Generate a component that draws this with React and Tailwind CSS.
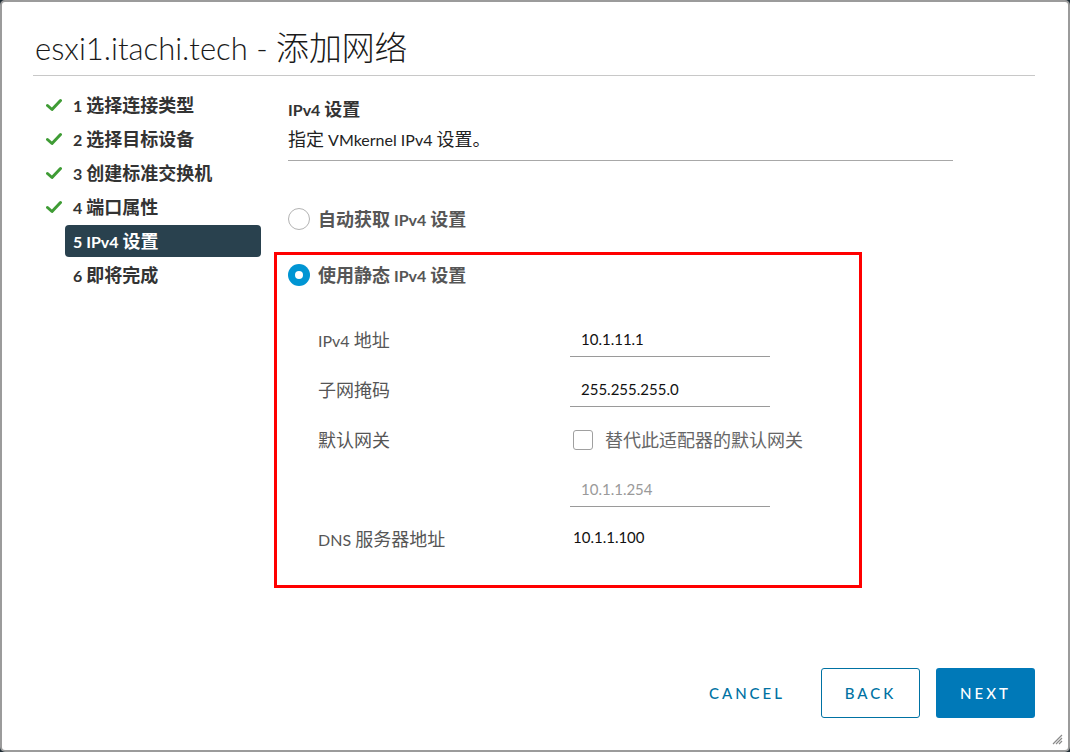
import React from 'react';

const steps = [
  { label: '1 选择连接类型', done: true },
  { label: '2 选择目标设备', done: true },
  { label: '3 创建标准交换机', done: true },
  { label: '4 端口属性', done: true },
  { label: '5 IPv4 设置', active: true },
  { label: '6 即将完成' },
];

const font = { fontFamily: 'Lato, "Noto Sans CJK SC", sans-serif' };

// CJK glyphs in the original are drawn larger than the Latin ones
const T = ({ children, big = 'text-[1.125em]' }) =>
  String(children)
    .split(/([\u3000-\u9fff\uff00-\uffef]+)/)
    .map((part, i) =>
      /[\u3000-\u9fff\uff00-\uffef]/.test(part) ? (
        <span key={i} className={big}>{part}</span>
      ) : (
        <React.Fragment key={i}>{part}</React.Fragment>
      )
    );

const Check = () => (
  <svg width="16" height="14" viewBox="0 0 16 14">
    <path d="M1.5 7.5 L6 11.5 L14.5 2.5" fill="none" stroke="#3f9c35" strokeWidth="3" strokeLinecap="round" strokeLinejoin="round" />
  </svg>
);

const Field = ({ value, muted }) => (
  <div className="w-[200px] h-[34px] flex items-center pl-[11px] border-b border-[#9a9a9a]">
    <span className={`text-[15px] ${muted ? 'text-[#9a9a9a]' : 'text-[#111]'}`}>{value}</span>
  </div>
);

export default function App() {
  return (
    <div className="w-[1070px] h-[752px] bg-[#1d2b33]" style={font}>
      <div className="relative h-full bg-white rounded-[5px] border-2 border-[#9b9b9b] flex flex-col pl-[31px] pr-[33px]">
        {/* Title */}
        <div className="h-[74px] flex items-end pb-[7px] border-b border-[#c8c8c8]">
          <h1 className="text-[31px] leading-[40px] font-light text-[#1a1a1a] pl-[2px] whitespace-nowrap">
            <T big="text-[1.06em]">esxi1.itachi.tech - 添加网络</T>
          </h1>
        </div>

        <div className="flex flex-1">
          {/* Steps */}
          <nav className="w-[250px] pt-[12px] flex flex-col">
            {steps.map((s) => (
              <div key={s.label} className="flex items-center h-[34px]">
                <div className="w-[32px] pl-[13px] flex items-center">{s.done && <Check />}</div>
                <div className={`w-[196px] h-[32px] flex items-center px-2 rounded-[4px] text-[16px] leading-[20px] font-bold ${s.active ? 'bg-[#29414e] text-white' : 'text-[#333]'}`}>
                  <span><T>{s.label}</T></span>
                </div>
              </div>
            ))}
          </nav>

          {/* Content */}
          <div className="flex-1 pl-[5px] pt-[22px]">
            <div className="w-[665px] border-b border-[#a8a8a8] pb-[10px]">
              <div className="h-[22px] flex items-center text-[16px] font-bold text-[#333]"><span><T>IPv4 设置</T></span></div>
              <div className="h-[22px] flex items-center text-[16px] text-[#222] mt-[8px]"><span><T>指定 VMkernel IPv4 设置。</T></span></div>
            </div>

            <label className="flex items-center gap-[8px] mt-[46px] h-[24px]">
              <span className="w-[22px] h-[22px] rounded-full border border-[#b3b3b3] bg-white"></span>
              <span className="text-[16px] font-bold text-[#565656]"><T>自动获取 IPv4 设置</T></span>
            </label>

            <div className="w-[588px] h-[336px] -ml-[14px] mt-[21px] border-[3px] border-[#ff0000] pl-[11px] pt-[8px]">
              <label className="flex items-center gap-[8px] h-[24px]">
                <span className="w-[22px] h-[22px] rounded-full bg-[#0095d3] flex items-center justify-center">
                  <span className="w-[8px] h-[8px] rounded-full bg-white"></span>
                </span>
                <span className="text-[16px] font-bold text-[#565656]"><T>使用静态 IPv4 设置</T></span>
              </label>

              <div className="pl-[30px] mt-[28px] grid grid-cols-[252px_1fr] text-[16px] text-[#565656]">
                <div className="h-[50px] flex items-center"><span><T>IPv4 地址</T></span></div>
                <div className="h-[50px] flex items-center"><Field value="10.1.11.1" /></div>

                <div className="h-[50px] flex items-center"><span><T>子网掩码</T></span></div>
                <div className="h-[50px] flex items-center"><Field value="255.255.255.0" /></div>

                <div className="h-[50px] flex items-center"><span><T>默认网关</T></span></div>
                <div className="h-[50px] flex items-center gap-[12px] pl-[3px]">
                  <span className="w-[20px] h-[20px] rounded-[3px] border border-[#a0a0a0]"></span>
                  <span className="text-[#666] text-[15px]"><T big="text-[1.2em]">替代此适配器的默认网关</T></span>
                </div>

                <div className="h-[50px]"></div>
                <div className="h-[50px] flex items-center"><Field value="10.1.1.254" muted /></div>

                <div className="h-[50px] flex items-center pb-[2px]"><span><T>DNS 服务器地址</T></span></div>
                <div className="h-[50px] flex items-center pl-[3px] pb-[6px] text-[15px] text-[#111]">10.1.1.100</div>
              </div>
            </div>
          </div>
        </div>

        {/* Footer */}
        <div className="flex justify-end items-center gap-[16px] pb-[32px]">
          <button className="h-[50px] px-[20px] text-[15px] tracking-[3px] text-[#0072a3] font-medium">CANCEL</button>
          <button className="w-[99px] h-[50px] rounded-[3px] border border-[#0072a3] text-[15px] tracking-[3px] text-[#0072a3] font-medium">BACK</button>
          <button className="w-[99px] h-[50px] rounded-[3px] bg-[#0079b8] text-[15px] tracking-[3px] text-white font-medium">NEXT</button>
        </div>

        <svg className="absolute right-[5px] bottom-[5px]" width="12" height="12" viewBox="0 0 12 12">
          <path d="M11 2 L2 11 M11 5 L5 11 M11 8 L8 11" stroke="#8a8a8a" strokeWidth="1.2" />
        </svg>
      </div>
    </div>
  );
}
